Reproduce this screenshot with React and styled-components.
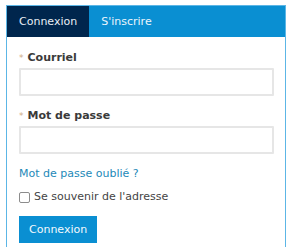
import React, { useState } from "react";
import styled, { createGlobalStyle } from "styled-components";

const Global = createGlobalStyle`
  html, body { margin: 0; padding: 0; background: #ffffff; }
  body { font-family: "DejaVu Sans", Verdana, sans-serif; font-size: 11px; }
  * { box-sizing: border-box; }
`;

const Page = styled.div`
  padding: 5px 14px 0 6px;
`;

const Panel = styled.div`
  width: 280px;
  height: 243px;
  border: 1px solid #5cb6e6;
  background: #ffffff;
`;

const TabBar = styled.div`
  display: flex;
  height: 31px;
  background: #0a8fd2;
`;

const Tab = styled.button`
  display: flex;
  align-items: center;
  height: 100%;
  padding: 0 12px;
  border: 0;
  margin: 0;
  font-family: inherit;
  font-size: 11px;
  color: ${(p) => (p.$active ? "#e8eef5" : "#eaf5fc")};
  background: ${(p) => (p.$active ? "#00264d" : "transparent")};
  cursor: pointer;
`;

const Body = styled.form`
  display: flex;
  flex-direction: column;
  padding: 13px 12px 0 12px;
`;

const Field = styled.div`
  display: flex;
  flex-direction: column;
  margin-bottom: 12px;
`;

const Label = styled.label`
  display: flex;
  align-items: baseline;
  gap: 4px;
  line-height: 16px;
  margin-bottom: 2px;
  font-weight: bold;
  font-size: 11px;
  color: #3a3a3a;
`;

const Star = styled.span`
  font-weight: normal;
  font-size: 9px;
  color: #d0ad88;
`;

const Input = styled.input`
  width: 255px;
  height: 28px;
  border: 2px solid #e6e6e6;
  border-radius: 1px;
  padding: 0 6px;
  font-family: inherit;
  font-size: 11px;
  outline: none;
`;

const Link = styled.a`
  line-height: 16px;
  color: #1d89b8;
  text-decoration: none;
  margin-bottom: 7px;
`;

const CheckRow = styled.label`
  display: flex;
  align-items: center;
  line-height: 16px;
  color: #444444;
  margin-bottom: 11px;
`;

const Box = styled.span`
  width: 11px;
  height: 11px;
  border: 1px solid #8c8c8c;
  border-radius: 2px;
  background: #ffffff;
  margin-right: 4px;
  margin-top: 1px;
`;

const Submit = styled.button`
  align-self: flex-start;
  height: 27px;
  padding: 0 10px;
  border: 0;
  background: #0a8fd2;
  color: #f2f9fd;
  font-family: inherit;
  font-size: 11px;
  cursor: pointer;
`;

export default function App() {
  const [tab, setTab] = useState("login");
  return (
    <Page>
      <Global />
      <Panel>
        <TabBar>
          <Tab type="button" $active={tab === "login"} onClick={() => setTab("login")}>
            Connexion
          </Tab>
          <Tab type="button" $active={tab === "signup"} onClick={() => setTab("signup")}>
            S'inscrire
          </Tab>
        </TabBar>
        <Body onSubmit={(e) => e.preventDefault()}>
          <Field>
            <Label>
              <Star>*</Star>Courriel
            </Label>
            <Input type="email" />
          </Field>
          <Field>
            <Label>
              <Star>*</Star>Mot de passe
            </Label>
            <Input type="password" />
          </Field>
          <Link href="#">Mot de passe oublié ?</Link>
          <CheckRow>
            <Box />
            Se souvenir de l'adresse
          </CheckRow>
          <Submit type="submit">Connexion</Submit>
        </Body>
      </Panel>
    </Page>
  );
}
